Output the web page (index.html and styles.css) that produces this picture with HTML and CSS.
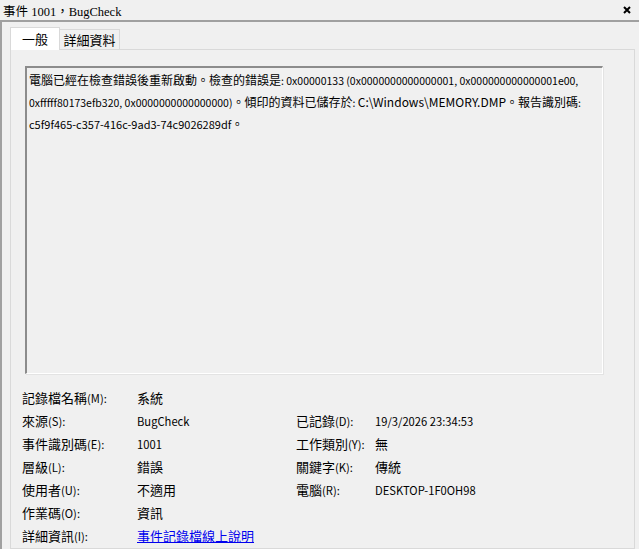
FILE: index.html
```html
<!doctype html>
<html lang="zh-Hant">
 <head>
  <meta charset="UTF-8">
  <link rel="stylesheet" href="styles.css">
  <title>事件 1001，BugCheck</title>
 </head>
 <body>
  <header class="titlebar">
   <span class="title">事件 1001，BugCheck</span>
   <svg class="close" width="8" height="8" viewBox="0 0 8 8">
    <path d="M1 1 L7 7 M7 1 L1 7" stroke="#000" stroke-width="2" />
   </svg>
  </header>
  <div class="frame">
   <nav class="tabs">
    <div class="tab active">一般</div>
    <div class="tab">詳細資料</div>
   </nav>
   <main class="panel">
    <!-- 中文字比英文數字大一點，英文部分用 .en 縮小 -->
    <div class="message">
     電腦已經在檢查錯誤後重新啟動。檢查的錯誤是<span class="en">: 0x00000133 (0x0000000000000001, 0x000000000000001e00,</span><br>
     <span class="en">0xfffff80173efb320, 0x0000000000000000)</span>。傾印的資料已儲存於<span class="en">: <span class="path">C:\Windows\MEMORY.DMP</span></span>。報告識別碼<span class="en">:</span><br>
     <span class="en guid">c5f9f465-c357-416c-9ad3-74c9026289df</span>。
    </div>
    <div class="fields">
     <span>記錄檔名稱<span class="en">(M):</span></span><span>系統</span><span></span><span></span>
     <span>來源<span class="en">(S):</span></span><span class="en">BugCheck</span><span>已記錄<span class="en">(D):</span></span><span class="en">19/3/2026 23:34:53</span>
     <span>事件識別碼<span class="en">(E):</span></span><span class="en">1001</span><span>工作類別<span class="en">(Y):</span></span><span>無</span>
     <span>層級<span class="en">(L):</span></span><span>錯誤</span><span>關鍵字<span class="en">(K):</span></span><span>傳統</span>
     <span>使用者<span class="en">(U):</span></span><span>不適用</span><span>電腦<span class="en">(R):</span></span><span class="en">DESKTOP-1F0OH98</span>
     <span>作業碼<span class="en">(O):</span></span><span>資訊</span><span></span><span></span>
     <span>詳細資訊<span class="en">(I):</span></span><span><a class="link" href="#">事件記錄檔線上說明</a></span><span></span><span></span>
    </div>
   </main>
  </div>
 </body>
</html>
```

FILE: styles.css
```css
*{
  box-sizing: border-box;
}
body{
  margin: 0;
  width: 639px;
  height: 549px;
  overflow: hidden;
  background: #f0f0f0;
  color: #000;
  font-family: "Noto Sans CJK TC", "Liberation Sans", sans-serif;
  font-size: 12px;
}
.titlebar{
  height: 20px;
  display: flex;
  align-items: center;
  justify-content: space-between;
  padding: 0 8px 0 3px;
  font-family: "Liberation Serif", "Noto Sans CJK TC", serif;
  font-size: 12.5px;
}
.close{
  display: block;
}
.frame{
  height: 529px;
  display: flex;
  flex-direction: column;
  border-top: 2px solid #a0a0a0;
  border-left: 2px solid #a0a0a0;
  padding: 6px 4px 0 8px;
}
.tabs{
  display: flex;
  align-items: flex-end;
  height: 22px;
  margin-bottom: -1px;
  position: relative;
  z-index: 1;
}
.tab{
  height: 21px;
  width: 60px;
  display: flex;
  align-items: center;
  justify-content: center;
  border: 1px solid #d9d9d9;
  border-left: none;
  background: #f0f0f0;
  font-size: 13px;
}
.tab.active{
  height: 23px;
  width: 50px;
  border-left: 1px solid #d9d9d9;
  border-bottom: none;
  background: #fff;
  padding-bottom: 2px;
}
.panel{
  flex: 1;
  border: 1px solid #d9d9d9;
  padding: 16px 0 0 0;
}
.message{
  width: 578px;
  height: 308px;
  margin-left: 14px;
  border-top: 2px solid #8c8c8c;
  border-left: 2px solid #8c8c8c;
  border-right: 1px solid #fff;
  border-bottom: 1px solid #fff;
  box-shadow: 1px 1px 0 #e3e3e3;
  padding: 1px 2px;
  line-height: 21px;
  white-space: nowrap;
}
.message .en{
  font-size: 10.5px;
}
.message .path{
  font-size: 12px;
}
.message .guid{
  font-size: 11px;
}
.fields{
  display: grid;
  grid-template-columns: 115px 159px 79px auto;
  grid-auto-rows: 23px;
  align-items: center;
  margin: 12px 0 0 11px;
  font-size: 13px;
}
.fields .en{
  font-size: 11.2px;
}
.link{
  color: #0000ee;
  text-decoration: underline;
}
```
